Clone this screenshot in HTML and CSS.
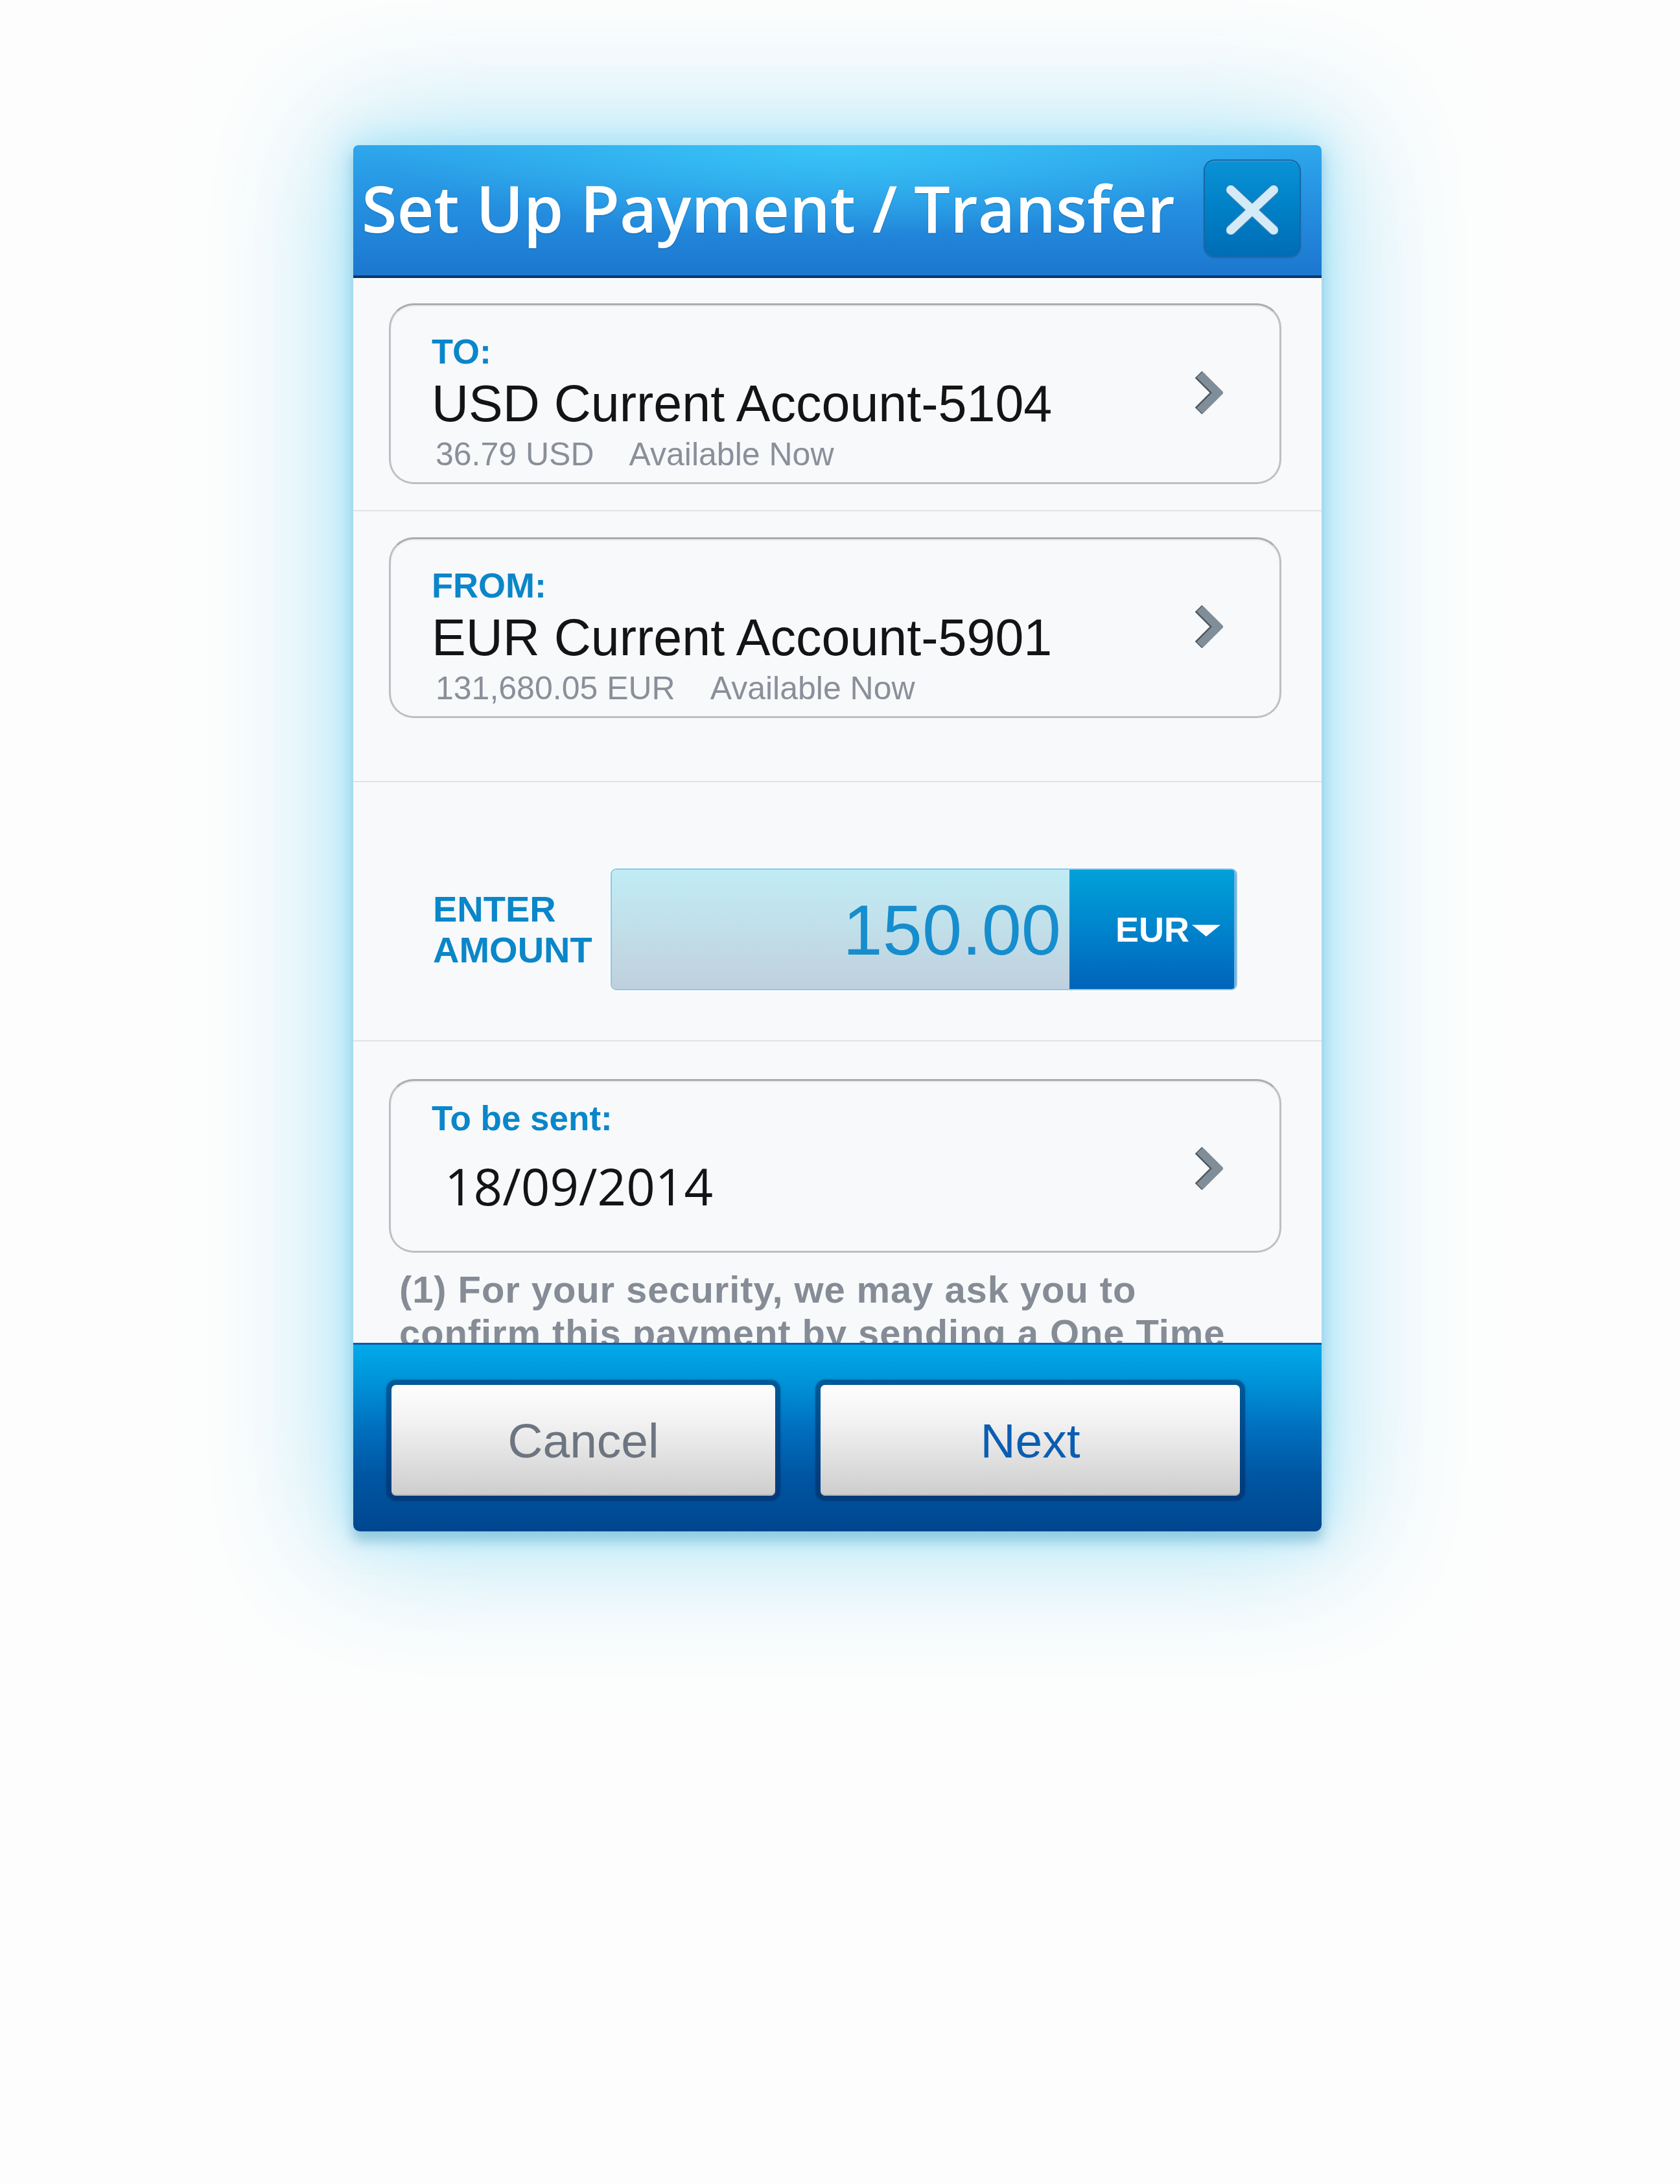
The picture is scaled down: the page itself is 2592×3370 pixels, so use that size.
FILE: index.html
```html
<!DOCTYPE html>
<html lang="en">
<head>
<meta charset="utf-8">
<title>Set Up Payment / Transfer</title>
<link rel="stylesheet" href="styles.css">
</head>
<body>
<div class="stage">
  <div class="dialog">
    <header class="dlg-head">
      <h1 class="title">Set Up Payment / Transfer</h1>
      <button class="close" aria-label="Close">
        <svg width="80" height="76" viewBox="0 0 80 76">
          <g stroke-linecap="round">
            <line x1="7" y1="7" x2="73" y2="69" stroke="#2f7fb8" stroke-width="17"/>
            <line x1="73" y1="7" x2="7" y2="69" stroke="#2f7fb8" stroke-width="17"/>
            <line x1="7" y1="7" x2="73" y2="69" stroke="#d4ebf7" stroke-width="14"/>
            <line x1="73" y1="7" x2="7" y2="69" stroke="#d4ebf7" stroke-width="14"/>
          </g>
        </svg>
      </button>
    </header>

    <main class="dlg-body">
      <section class="sec sec-first">
        <div class="card">
          <div class="card-text">
            <div class="lbl">TO:</div>
            <div class="acct">USD Current Account-5104</div>
            <div class="sub"><span class="bal">36.79 USD</span><span>Available Now</span></div>
          </div>
          <svg class="chev" width="46" height="70" viewBox="0 0 46 70">
            <polyline points="8,7 36,35 8,63" fill="none" stroke="#4c565e" stroke-width="15" stroke-linejoin="miter"/>
            <polyline points="10,7 38,35 10,63" fill="none" stroke="#7f8e98" stroke-width="13" stroke-linejoin="miter"/>
          </svg>
        </div>
      </section>

      <section class="sec sec-second">
        <div class="card">
          <div class="card-text">
            <div class="lbl">FROM:</div>
            <div class="acct">EUR Current Account-5901</div>
            <div class="sub"><span class="bal">131,680.05 EUR</span><span>Available Now</span></div>
          </div>
          <svg class="chev" width="46" height="70" viewBox="0 0 46 70">
            <polyline points="8,7 36,35 8,63" fill="none" stroke="#4c565e" stroke-width="15" stroke-linejoin="miter"/>
            <polyline points="10,7 38,35 10,63" fill="none" stroke="#7f8e98" stroke-width="13" stroke-linejoin="miter"/>
          </svg>
        </div>
      </section>

      <section class="sec sec-amount">
        <div class="amt-label">ENTER<br>AMOUNT</div>
        <div class="amt-box">
          <div class="amt-value">150.00</div>
          <div class="amt-cur">EUR<svg class="tri" width="44" height="18" viewBox="0 0 44 18"><polygon points="0,0 44,0 22,18" fill="#ffffff"/></svg></div>
        </div>
      </section>

      <section class="sec-date">
        <div class="card card-date">
          <div class="card-text">
            <div class="lbl lbl-date">To be sent:</div>
            <div class="date">18/09/2014</div>
          </div>
          <svg class="chev" width="46" height="70" viewBox="0 0 46 70">
            <polyline points="8,7 36,35 8,63" fill="none" stroke="#4c565e" stroke-width="15" stroke-linejoin="miter"/>
            <polyline points="10,7 38,35 10,63" fill="none" stroke="#7f8e98" stroke-width="13" stroke-linejoin="miter"/>
          </svg>
        </div>
        <p class="note">(1) For your security, we may ask you to<br>confirm this payment by sending a One Time</p>
      </section>
    </main>

    <footer class="dlg-foot">
      <button class="btn btn-cancel">Cancel</button>
      <button class="btn btn-next">Next</button>
    </footer>
  </div>
</div>
</body>
</html>
```

FILE: styles.css
```css
* {
  box-sizing: border-box;
}

html, body {
  margin: 0;
  padding: 0;
}

body {
  width: 2592px;
  height: 3370px;
  background: #fdfdfd;
  font-family: "Liberation Sans", Arial, Helvetica, sans-serif;
  overflow: hidden;
}

.stage {
  padding: 224px 0 0 545px;
}

.dialog {
  width: 1494px;
  border-radius: 8px 8px 10px 10px;
  box-shadow:
    0 0 200px 30px rgba(125, 215, 245, 0.6),
    0 0 50px 8px rgba(130, 215, 245, 0.5),
    0 14px 18px rgba(0, 80, 120, 0.35);
  background: #f7f9fb;
}

/* ---------- header ---------- */
.dlg-head {
  height: 205px;
  padding: 0 32px 8px 13px;
  display: flex;
  align-items: center;
  justify-content: space-between;
  border-radius: 8px 8px 0 0;
  border-bottom: 4px solid #0b3768;
  background:
    radial-gradient(ellipse 700px 140px at 50% 0%, rgba(58, 200, 248, 0.9) 0%, rgba(58, 200, 248, 0) 100%),
    linear-gradient(#2ea8ec 0%, #2590e0 45%, #1c77cf 100%);
}

.title {
  margin: 0;
  font-family: "Open Sans", "Liberation Sans", sans-serif;
  font-weight: 600;
  font-size: 99px;
  line-height: 120px;
  color: #ffffff;
  white-space: nowrap;
  text-shadow: 0 1px 2px rgba(0, 50, 110, 0.35);
}

.close {
  width: 150px;
  height: 150px;
  padding: 0;
  display: flex;
  align-items: center;
  justify-content: center;
  border: 2px solid #1467a6;
  border-radius: 17px;
  background: linear-gradient(#0a92d6 0%, #0080c6 50%, #006db6 100%);
  box-shadow: inset 0 1px 0 rgba(255, 255, 255, 0.18), 0 2px 2px rgba(0, 40, 90, 0.25);
}

.close svg {
  margin-top: 6px;
}

/* ---------- body ---------- */
.dlg-body {
  display: block;
  height: 1643px;
  overflow: hidden;
  background: #f7f9fb;
}

.sec {
  border-bottom: 2px solid #dfe4e8;
}

.sec-first {
  padding: 39px 62px 40px 55px;
}

.sec-second {
  padding: 40px 62px 97px 55px;
}

.card {
  height: 279px;
  padding: 41px 0 0 63px;
  display: flex;
  align-items: flex-start;
  border: 3px solid #bcc0c4;
  border-top-color: #a9adb1;
  border-radius: 38px;
  background: #f8f9fb;
  box-shadow: inset 0 2px 2px rgba(0, 0, 0, 0.06);
}

.card-text {
  flex: 1;
}

.lbl {
  font-weight: bold;
  font-size: 54px;
  line-height: 60px;
  color: #0a86c9;
}

.acct {
  margin-top: 11px;
  font-size: 79px;
  line-height: 80px;
  color: #141414;
  white-space: nowrap;
}

.sub {
  margin: 10px 0 0 6px;
  font-size: 50px;
  line-height: 56px;
  color: #8a8f99;
  white-space: nowrap;
}

.bal {
  margin-right: 54px;
}

.chev {
  flex: none;
  align-self: center;
  margin: -44px 87px 0 0;
}

/* ---------- amount ---------- */
.sec-amount {
  padding: 133px 130px 77px 123px;
  display: flex;
  align-items: center;
}

.amt-label {
  width: 274px;
  font-weight: bold;
  font-size: 56px;
  line-height: 63px;
  color: #0a86c9;
}

.amt-box {
  width: 967px;
  height: 188px;
  display: flex;
  border: 2px solid #8ec6e6;
  border-radius: 9px;
  overflow: hidden;
  box-shadow: 0 0 2px 2px rgba(255, 255, 255, 0.9);
}

.amt-value {
  width: 706px;
  padding-right: 13px;
  display: flex;
  align-items: center;
  justify-content: flex-end;
  font-size: 110px;
  color: #168dcd;
  background: linear-gradient(#c0ecf5 0%, #c1dfe9 50%, #bfd0dd 100%);
}

.amt-cur {
  flex: 1;
  padding-left: 71px;
  display: flex;
  align-items: center;
  font-weight: bold;
  font-size: 54px;
  color: #ffffff;
  background: linear-gradient(#00a1d9 0%, #0084cc 50%, #0063ba 100%);
  border-right: 3px solid #6ab4e6;
}

.tri {
  margin: 4px 0 0 4px;
}

/* ---------- date ---------- */
.sec-date {
  padding: 58px 62px 0 55px;
}

.card-date {
  height: 268px;
  padding: 28px 0 0 63px;
}

.lbl-date {
  font-size: 53px;
}

.date {
  margin: 26px 0 0 20px;
  font-family: "Open Sans", "Liberation Sans", sans-serif;
  font-weight: 500;
  font-size: 78px;
  line-height: 96px;
  color: #141414;
}

.card-date .chev {
  margin-top: -20px;
}

.note {
  margin: 23px 0 0 16px;
  font-weight: bold;
  font-size: 58px;
  line-height: 67px;
  letter-spacing: 0.9px;
  color: #868c96;
  white-space: nowrap;
}

/* ---------- footer ---------- */
.dlg-foot {
  height: 291px;
  padding: 62px 0 0 59px;
  display: flex;
  align-items: flex-start;
  gap: 70px;
  border-top: 3px solid #0a5ca8;
  border-radius: 0 0 10px 10px;
  background: linear-gradient(#00aae8 0%, #0090d6 22%, #006fbe 45%, #0056a2 70%, #00468f 100%);
}

.btn {
  height: 171px;
  padding: 0;
  border: none;
  border-radius: 7px;
  font-family: "Liberation Sans", Arial, sans-serif;
  font-size: 75px;
  background: linear-gradient(#fefefe 0%, #f1f1f1 35%, #dedede 70%, #cdcdcd 100%);
  box-shadow:
    0 0 0 8px rgba(0, 45, 100, 0.45),
    0 0 3px 9px rgba(0, 45, 100, 0.18),
    inset 0 -2px 0 rgba(0, 0, 0, 0.12);
}

.btn-cancel {
  width: 592px;
  color: #6c7580;
}

.btn-next {
  width: 647px;
  color: #0b5db2;
}
```
